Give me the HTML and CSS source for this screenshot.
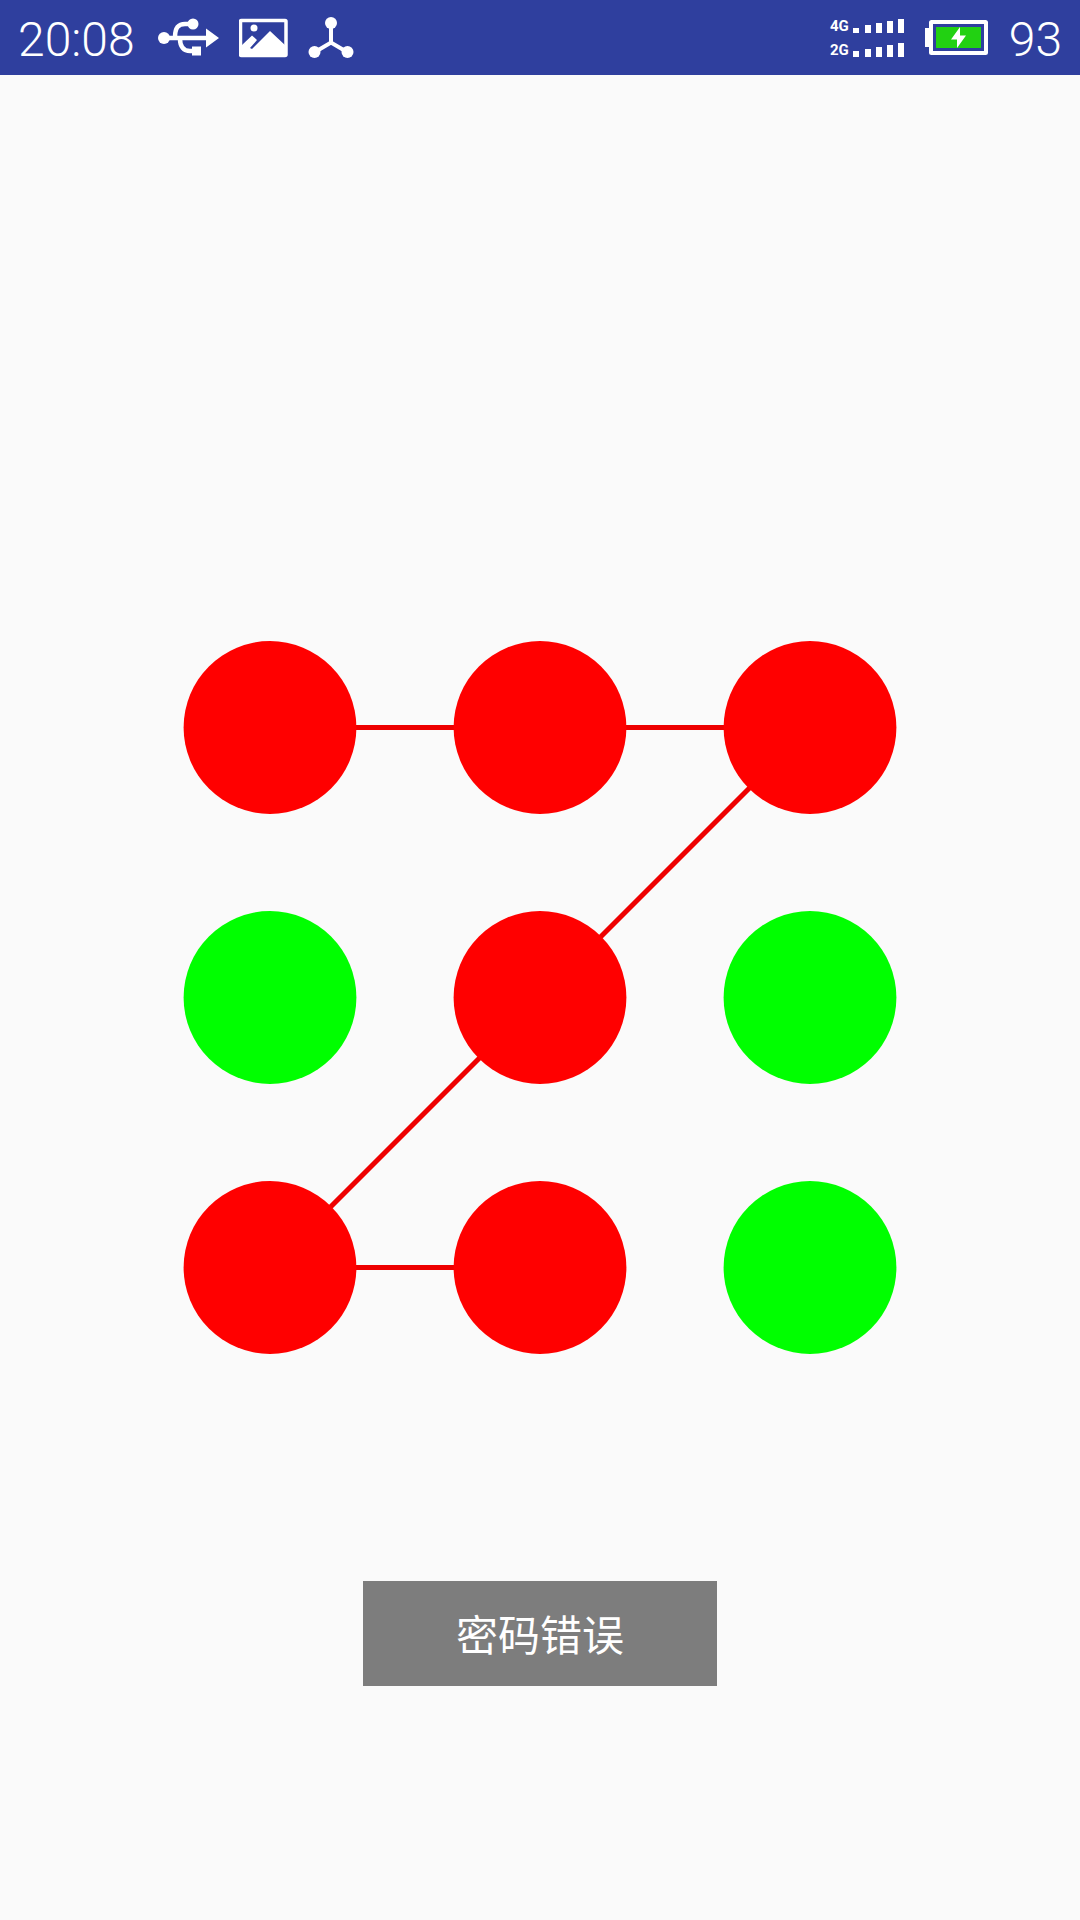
FILE: index.html
```html
<!DOCTYPE html>
<html lang="zh-CN">
<head>
<meta charset="utf-8">
<meta name="viewport" content="width=device-width, initial-scale=1">
<title>密码错误</title>
<link rel="stylesheet" href="styles.css">
</head>
<body>
<header class="status-bar">
  <div class="status-group">
    <time class="status-text">20:08</time>
    <div class="notifications">
      <svg class="icon" width="62" height="44" viewBox="158 16 62 44" aria-hidden="true">
        <path d="M164 38H208M175 37C175 28 178 24 185 24H192M180 39C180 47 184 51 190 51H196" fill="none" stroke="#fff" stroke-width="4.500"/>
        <circle cx="164" cy="38" r="6" fill="#fff"/>
        <circle cx="193" cy="24" r="5.500" fill="#fff"/>
        <path d="M192 46.500h9v9h-9zM206 28.500L219 38L206 47.500z" fill="#fff"/>
      </svg>
      <svg class="icon" width="50" height="44" viewBox="239 16 50 44" aria-hidden="true">
        <rect x="240.500" y="20.500" width="45.500" height="35" rx="1" fill="none" stroke="#fff" stroke-width="3.500"/>
        <circle cx="254" cy="28" r="3.500" fill="#fff"/>
        <path d="M242 45L252 35.500L257 40L250 48L252 49L270 31L286 46V55H242z" fill="#fff"/>
      </svg>
      <svg class="icon" width="46" height="44" viewBox="308 16 46 44" aria-hidden="true">
        <path d="M331 24V43M315 52L331 42.500L347 52" fill="none" stroke="#fff" stroke-width="4"/>
        <circle cx="331" cy="23" r="6" fill="#fff"/>
        <circle cx="314.500" cy="52" r="6" fill="#fff"/>
        <circle cx="347.500" cy="52" r="6" fill="#fff"/>
      </svg>
    </div>
  </div>
  <div class="status-group status-group-end">
    <div class="signals">
      <div class="signal">
        <span class="network">4G</span>
        <svg class="icon" width="52" height="16" viewBox="0 0 52 16" aria-hidden="true"><path d="M0 10h6v5H0zM12 7h6v8h-6zM23 5h6v10h-6zM34 3h6v12h-6zM45 1h6v14h-6z" fill="#fff"/></svg>
      </div>
      <div class="signal">
        <span class="network">2G</span>
        <svg class="icon" width="52" height="16" viewBox="0 0 52 16" aria-hidden="true"><path d="M0 9h6v6H0zM12 7h6v8h-6zM23 5h6v10h-6zM34 3h6v12h-6zM45 1h6v14h-6z" fill="#fff"/></svg>
      </div>
    </div>
    <svg class="icon" width="64" height="44" viewBox="925 16 64 44" aria-hidden="true">
      <path d="M925 28h5v19h-5z" fill="#fff"/>
      <rect x="931" y="22" width="55" height="31" rx="0.500" fill="none" stroke="#fff" stroke-width="4"/>
      <path d="M936 27h45v21h-45z" fill="#22d112"/>
      <path d="M960 27L951 39.500H957L957 48L966 35.500H960z" fill="#fff"/>
    </svg>
    <span class="status-text">93</span>
  </div>
</header>
<main class="screen">
  <svg class="pattern" viewBox="0 0 1080 714" role="img" aria-label="图案密码">
    <path class="trace" d="M270 87.500H810L270 627.500H540"/>
    <g class="dot-error">
      <circle cx="270" cy="87.500" r="86.400"/>
      <circle cx="540" cy="87.500" r="86.400"/>
      <circle cx="810" cy="87.500" r="86.400"/>
      <circle cx="540" cy="357.500" r="86.400"/>
      <circle cx="270" cy="627.500" r="86.400"/>
      <circle cx="540" cy="627.500" r="86.400"/>
    </g>
    <g class="dot-idle">
      <circle cx="270" cy="357.500" r="86.400"/>
      <circle cx="810" cy="357.500" r="86.400"/>
      <circle cx="810" cy="627.500" r="86.400"/>
    </g>
  </svg>
  <p class="toast" role="alert">密码错误</p>
</main>
</body>
</html>
```
FILE: styles.css
```css
* {
  box-sizing: border-box;
}

body {
  margin: 0;
  min-height: 100vh;
  background: #fafafa;
  font-family: Roboto, "Noto Sans CJK SC", sans-serif;
}

.status-bar {
  display: flex;
  justify-content: space-between;
  align-items: center;
  height: 75px;
  padding: 0 18px;
  background: #2f3f9e;
  color: #fff;
}

.status-group {
  display: flex;
  align-items: center;
  gap: 23px;
}

.status-group-end {
  gap: 20px;
}

.notifications {
  display: flex;
  align-items: center;
  gap: 19px;
}

.status-text {
  padding-top: 4px;
  font-size: 48px;
  font-weight: 300;
  line-height: 71px;
}

.icon {
  display: block;
  flex: none;
}

.signals {
  display: flex;
  flex-direction: column;
  gap: 8px;
}

.signal {
  display: flex;
  align-items: center;
  gap: 4px;
}

.network {
  font-size: 15px;
  font-weight: 700;
  line-height: 16px;
}

.screen {
  display: flex;
  flex-direction: column;
  align-items: center;
  padding: 565px 0 40px;
}

.pattern {
  display: block;
  width: 100%;
}

.trace {
  fill: none;
  stroke: #ee0000;
  stroke-width: 5;
}

.dot-error {
  fill: #ff0000;
}

.dot-idle {
  fill: #00ff00;
}

.toast {
  margin: 227px 0 0;
  padding: 19px 93px 21px;
  background: #7d7d7d;
  color: #fff;
  font-family: "Noto Sans CJK SC", sans-serif;
  font-size: 42px;
  font-weight: 400;
  line-height: 65px;
}
```
